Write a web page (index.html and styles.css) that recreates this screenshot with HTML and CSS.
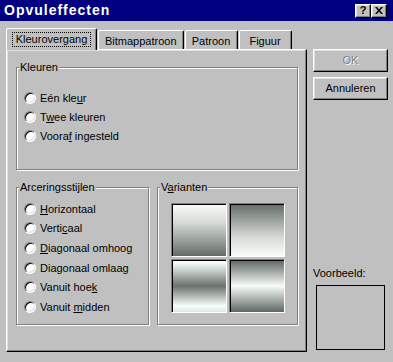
FILE: index.html
```html
<!DOCTYPE html>
<html lang="nl">
<head>
    <meta charset="UTF-8">
    <title>Opvuleffecten</title>
    <link rel="stylesheet" href="styles.css">
</head>
<body>
    <div class="dialog">
        <div class="titlebar">
            <span class="title">Opvuleffecten</span>
            <div class="title-buttons">
                <span class="tbtn help">?</span>
                <span class="tbtn">
                    <svg width="8" height="7" viewBox="0 0 8 7">
                        <path d="M0 0h2l2 2.5L6 0h2L5 3.5 8 7H6L4 4.5 2 7H0l3-3.5z" fill="#000"/>
                    </svg>
                </span>
            </div>
        </div>

        <div class="body">
            <div class="sheet">
                <div class="tabs">
                    <div class="tab active"><span class="focus">Kleurovergang</span></div>
                    <div class="tab">Bitmappatroon</div>
                    <div class="tab">Patroon</div>
                    <div class="tab">Figuur</div>
                </div>

                <div class="panel">
                    <div class="group colors">
                        <span class="group-title">Kleuren</span>
                        <label class="radio"><span class="dot"></span><span>Eén kle<u>u</u>r</span></label>
                        <label class="radio"><span class="dot"></span><span>T<u>w</u>ee kleuren</span></label>
                        <label class="radio"><span class="dot"></span><span>Voora<u>f</u> ingesteld</span></label>
                    </div>

                    <div class="group-row">
                        <div class="group styles">
                            <span class="group-title">Arceringsstijlen</span>
                            <label class="radio wide"><span class="dot"></span><span><u>H</u>orizontaal</span></label>
                            <label class="radio wide"><span class="dot"></span><span>Verti<u>c</u>aal</span></label>
                            <label class="radio wide"><span class="dot"></span><span><u>D</u>iagonaal omhoog</span></label>
                            <label class="radio wide"><span class="dot"></span><span>Diagonaal omlaa<u>g</u></span></label>
                            <label class="radio wide"><span class="dot"></span><span>Vanuit hoe<u>k</u></span></label>
                            <label class="radio wide"><span class="dot"></span><span>Vanuit <u>m</u>idden</span></label>
                        </div>

                        <div class="group variants">
                            <span class="group-title">V<u>a</u>rianten</span>
                            <div class="swatches">
                                <span class="swatch down"></span>
                                <span class="swatch up"></span>
                                <span class="swatch band-dark"></span>
                                <span class="swatch band-light"></span>
                            </div>
                        </div>
                    </div>
                </div>
            </div>

            <div class="side">
                <button class="btn" disabled>OK</button>
                <button class="btn">Annuleren</button>
                <div class="preview-label">Voorbeeld:</div>
                <div class="preview"></div>
            </div>
        </div>
    </div>
</body>
</html>
```

FILE: styles.css
```css
/* Algemeen */
* {
    box-sizing: border-box;
}

body {
    margin: 0;
    background-color: #c0c0c0;
    font-family: "Liberation Sans", Arial, sans-serif;
    font-size: 11px;
    line-height: 13px;
    color: #000;
}

u {
    text-decoration: underline;
    text-underline-offset: 1px;
}

.dialog {
    width: 393px;
    height: 362px;
    background-color: #c0c0c0;
    overflow: hidden;
}

/* Titelbalk */
.titlebar {
    height: 21px;
    background-color: #000080;
    display: flex;
    align-items: center;
    justify-content: space-between;
    padding: 0 6px 0 4px;
}

.title {
    color: #fff;
    font-weight: bold;
    font-size: 14px;
    line-height: 21px;
    letter-spacing: 1px;
}

.title-buttons {
    display: flex;
}

.tbtn {
    width: 16px;
    height: 14px;
    display: flex;
    align-items: center;
    justify-content: center;
    background-color: #c0c0c0;
    border: 1px solid;
    border-color: #fff #000 #000 #fff;
    box-shadow: inset -1px -1px #808080, inset 1px 1px #dfdfdf;
}

.help {
    font-weight: bold;
    font-size: 11px;
    line-height: 11px;
}

/* Inhoud */
.body {
    display: flex;
    padding: 7px 0 0 6px;
}

.sheet {
    width: 301px;
}

/* Tabbladen */
.tabs {
    display: flex;
    align-items: flex-end;
    height: 21px;
}

.tab {
    height: 19px;
    min-width: 53px;
    padding: 4px 6px 0;
    text-align: center;
    border: 1px solid;
    border-bottom: 0;
    border-color: #fff #000 transparent #fff;
    box-shadow: inset -1px 0 #808080;
    border-radius: 2px 2px 0 0;
}

.tab + .tab {
    margin-left: 1px;
}

.tab.active {
    position: relative;
    z-index: 1;
    width: 91px;
    height: 22px;
    margin-bottom: -1px;
    padding: 3px 0 0;
    background-color: #c0c0c0;
}

.focus {
    display: inline-block;
    padding: 1px 4px;
    outline: 1px dotted #000;
    outline-offset: -1px;
}

.panel {
    height: 303px;
    border: 1px solid;
    border-color: #fff #000 #000 #fff;
    box-shadow: inset -1px -1px #808080, inset 1px 1px #dfdfdf;
    padding: 17px 0 0 9px;
}

/* Groepsvakken */
.group {
    position: relative;
    border: 1px solid #808080;
    box-shadow: inset 1px 1px #fff, 1px 1px #fff;
    padding-left: 7px;
}

.group-title {
    position: absolute;
    top: -7px;
    left: 2px;
    padding: 0 1px;
    background-color: #c0c0c0;
}

.colors {
    width: 282px;
    height: 103px;
    padding-top: 20px;
}

.group-row {
    display: flex;
    gap: 8px;
    margin-top: 17px;
}

.styles {
    width: 133px;
    height: 138px;
    padding-top: 11px;
}

.variants {
    width: 141px;
    height: 138px;
    padding: 15px 0 0 13px;
}

/* Keuzerondjes */
.radio {
    display: flex;
    align-items: center;
    height: 19px;
    padding-top: 1px;
}

.radio.wide {
    height: 19.6px;
}

.dot {
    width: 12px;
    height: 12px;
    margin: -1px 4px 0 0;
    border-radius: 50%;
    background-color: #fff;
    border: 1px solid;
    border-color: #808080 #fff #fff #808080;
    box-shadow: inset 1px 1px #000, inset -1px -1px #dfdfdf;
}

/* Varianten */
.swatches {
    display: grid;
    grid-template-columns: 56px 56px;
    grid-template-rows: 54px 54px;
    gap: 2px;
}

.swatch {
    border: 1px solid;
    border-color: #808080 #fff #fff #808080;
    box-shadow: inset 1px 1px #000;
}

.down {
    background: linear-gradient(#f8fcf8, #d8dcd8 35%, #646c68);
}

.up {
    background: linear-gradient(#646c68, #d8dcd8 65%, #f8fcf8);
}

.band-dark {
    background: linear-gradient(#f8fcf8 5%, #6a726e 50%, #f8fcf8 88%, #e4e8e4);
}

.band-light {
    background: linear-gradient(#5e6662, #f8fcf8 50%, #5e6662);
}

/* Knoppen rechts */
.side {
    display: flex;
    flex-direction: column;
    width: 75px;
    height: 301px;
    margin: 21px 0 0 6px;
}

.btn {
    width: 75px;
    height: 23px;
    padding: 0;
    font: inherit;
    color: #000;
    background-color: #c0c0c0;
    border: 1px solid;
    border-color: #fff #000 #000 #fff;
    box-shadow: inset -1px -1px #808080, inset 1px 1px #dfdfdf;
}

.btn + .btn {
    margin-top: 5px;
}

.btn:disabled {
    color: #808080;
    text-shadow: 1px 1px #fff;
}

.preview-label {
    margin-top: auto;
}

.preview {
    width: 69px;
    height: 65px;
    margin: 5px 0 0 3px;
    border: 1px solid #000;
}
```
